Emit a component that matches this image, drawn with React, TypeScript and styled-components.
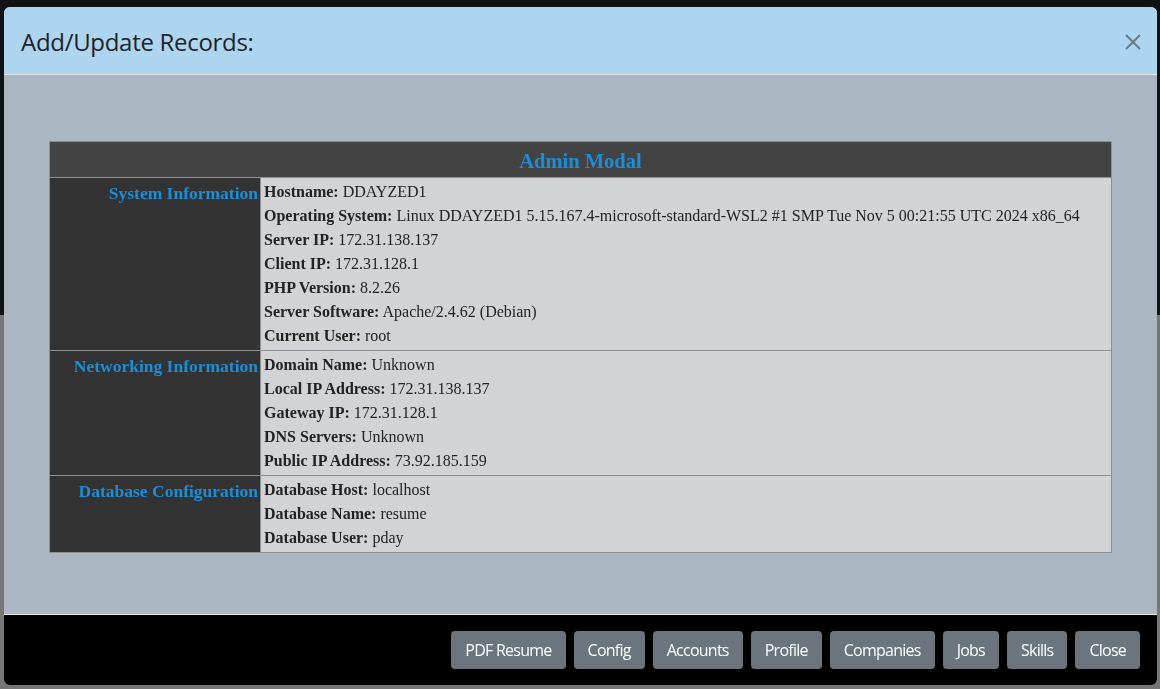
import React from "react";
import styled, { createGlobalStyle } from "styled-components";

const Global = createGlobalStyle`
  html, body { margin: 0; padding: 0; }
  body { width: 1160px; height: 689px; overflow: hidden; background: #767676; }
`;

const Page = styled.div`
  width: 1160px;
  height: 689px;
  display: flex;
  flex-direction: column;
`;

const PageTop = styled.div`
  height: 315px;
  background: #111214;
`;

const PageBottom = styled.div`
  flex: 1;
  background: #767676;
`;

const Overlay = styled.div`
  position: fixed;
  inset: 0;
  padding: 7px 3px 4px 4px;
  box-sizing: border-box;
  display: flex;
`;

const Modal = styled.div`
  flex: 1;
  display: flex;
  flex-direction: column;
  border-radius: 6px;
  overflow: hidden;
  background: #aab7c2;
`;

const Header = styled.div`
  height: 68px;
  background: #add5f0;
  border-bottom: 1px solid #e3e7ea;
  display: flex;
  align-items: center;
  justify-content: space-between;
  padding: 2px 12px 0 17px;
  box-sizing: border-box;
`;

const Title = styled.h5`
  margin: 0;
  font-family: "Open Sans", "Noto Sans", sans-serif;
  font-weight: 500;
  font-size: 24px;
  letter-spacing: -0.3px;
  color: #1f2327;
`;

const CloseX = styled.button`
  width: 24px;
  height: 24px;
  padding: 0;
  border: 0;
  background: transparent;
  display: flex;
  align-items: center;
  justify-content: center;
  cursor: pointer;
`;

const Body = styled.div`
  flex: 1;
  padding: 66px 45px 0 45px;
`;

const Table = styled.table`
  width: 100%;
  border-collapse: collapse;
  border: 1px solid #8c8f93;
  font-family: "Liberation Serif", "Times New Roman", serif;
  font-size: 16px;
  color: #222;
`;

const HeadCell = styled.th`
  box-sizing: border-box;
  background: #434343;
  color: #1a8fd8;
  font-size: 20.5px;
  font-weight: bold;
  height: 36px;
  line-height: 32px;
  padding: 2px 0 0 0;
  border: 1px solid #8c8f93;
  text-align: center;
`;

const LabelCell = styled.td`
  width: 208px;
  background: #333333;
  color: #1a8fd8;
  font-size: 17.5px;
  font-weight: bold;
  text-align: right;
  vertical-align: top;
  padding: 3px 2px 0 0;
  line-height: 24px;
  border: 1px solid #8c8f93;
`;

const DataCell = styled.td`
  background: #d2d3d5;
  vertical-align: top;
  padding: 2px 2px 2px 3px;
  line-height: 24px;
  border: 1px solid #8c8f93;
`;

const Line = styled.div`
  white-space: nowrap;
`;

const Footer = styled.div`
  height: 71px;
  background: #000;
  border-top: 1px solid #e3e7ea;
  display: flex;
  align-items: center;
  justify-content: flex-end;
  gap: 8px;
  padding: 0 17px 0 0;
  box-sizing: border-box;
`;

const Btn = styled.button`
  height: 38px;
  padding: 0 14px;
  border: 0;
  border-radius: 4px;
  background: #6c757d;
  color: #fff;
  font-family: "Open Sans", "Noto Sans", sans-serif;
  font-size: 16px;
  letter-spacing: -0.75px;
  cursor: pointer;
`;

type Item = [string, string];
const sections: { title: string; items: Item[] }[] = [
  {
    title: "System Information",
    items: [
      ["Hostname:", "DDAYZED1"],
      ["Operating System:", "Linux DDAYZED1 5.15.167.4-microsoft-standard-WSL2 #1 SMP Tue Nov 5 00:21:55 UTC 2024 x86_64"],
      ["Server IP:", "172.31.138.137"],
      ["Client IP:", "172.31.128.1"],
      ["PHP Version:", "8.2.26"],
      ["Server Software:", "Apache/2.4.62 (Debian)"],
      ["Current User:", "root"],
    ],
  },
  {
    title: "Networking Information",
    items: [
      ["Domain Name:", "Unknown"],
      ["Local IP Address:", "172.31.138.137"],
      ["Gateway IP:", "172.31.128.1"],
      ["DNS Servers:", "Unknown"],
      ["Public IP Address:", "73.92.185.159"],
    ],
  },
  {
    title: "Database Configuration",
    items: [
      ["Database Host:", "localhost"],
      ["Database Name:", "resume"],
      ["Database User:", "pday"],
    ],
  },
];

const buttons = ["PDF Resume", "Config", "Accounts", "Profile", "Companies", "Jobs", "Skills", "Close"];

export default function App() {
  return (
    <>
      <Global />
      <Page>
        <PageTop />
        <PageBottom />
      </Page>
      <Overlay>
        <Modal>
          <Header>
            <Title>Add/Update Records:</Title>
            <CloseX aria-label="Close">
              <svg width="16" height="16" viewBox="0 0 16 16">
                <path d="M1 1 L15 15 M15 1 L1 15" stroke="#6b7a86" strokeWidth="2" />
              </svg>
            </CloseX>
          </Header>
          <Body>
            <Table>
              <thead>
                <tr>
                  <HeadCell colSpan={2}>Admin Modal</HeadCell>
                </tr>
              </thead>
              <tbody>
                {sections.map((s) => (
                  <tr key={s.title}>
                    <LabelCell>{s.title}</LabelCell>
                    <DataCell>
                      {s.items.map(([k, v]) => (
                        <Line key={k}>
                          <b>{k}</b> {v}
                        </Line>
                      ))}
                    </DataCell>
                  </tr>
                ))}
              </tbody>
            </Table>
          </Body>
          <Footer>
            {buttons.map((b) => (
              <Btn key={b}>{b}</Btn>
            ))}
          </Footer>
        </Modal>
      </Overlay>
    </>
  );
}
